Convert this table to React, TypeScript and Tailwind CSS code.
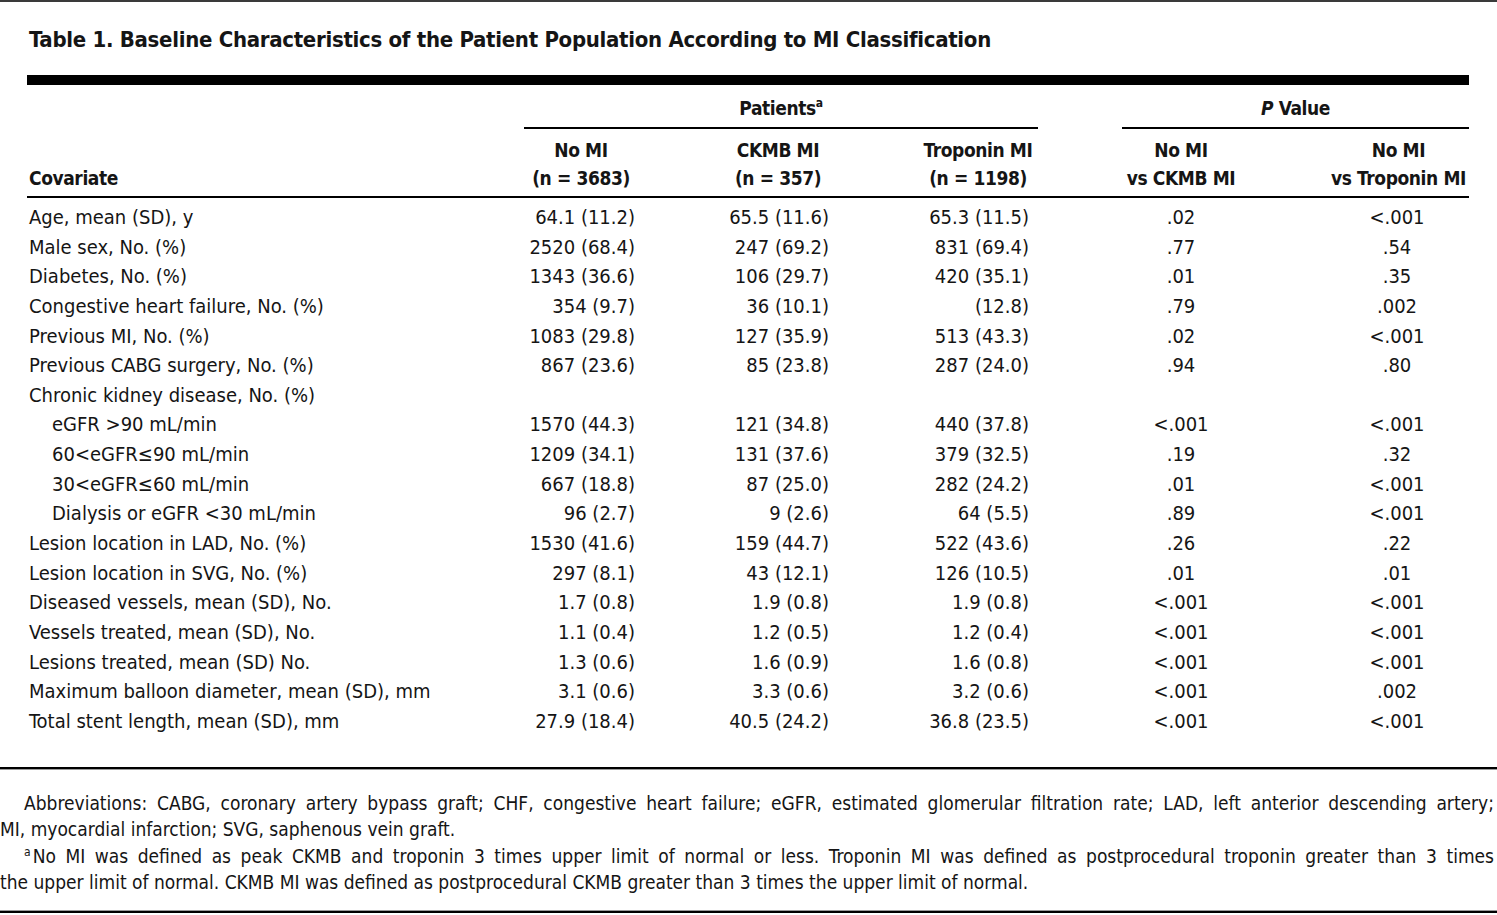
const rows: { label: string; indent?: boolean; v: string[] }[] = [
  { label: "Age, mean (SD), y", v: ["64.1 (11.2)", "65.5 (11.6)", "65.3 (11.5)", ".02", "<.001"] },
  { label: "Male sex, No. (%)", v: ["2520 (68.4)", "247 (69.2)", "831 (69.4)", ".77", ".54"] },
  { label: "Diabetes, No. (%)", v: ["1343 (36.6)", "106 (29.7)", "420 (35.1)", ".01", ".35"] },
  { label: "Congestive heart failure, No. (%)", v: ["354 (9.7)", "36 (10.1)", "(12.8)", ".79", ".002"] },
  { label: "Previous MI, No. (%)", v: ["1083 (29.8)", "127 (35.9)", "513 (43.3)", ".02", "<.001"] },
  { label: "Previous CABG surgery, No. (%)", v: ["867 (23.6)", "85 (23.8)", "287 (24.0)", ".94", ".80"] },
  { label: "Chronic kidney disease, No. (%)", v: ["", "", "", "", ""] },
  { label: "eGFR >90 mL/min", indent: true, v: ["1570 (44.3)", "121 (34.8)", "440 (37.8)", "<.001", "<.001"] },
  { label: "60<eGFR≤90 mL/min", indent: true, v: ["1209 (34.1)", "131 (37.6)", "379 (32.5)", ".19", ".32"] },
  { label: "30<eGFR≤60 mL/min", indent: true, v: ["667 (18.8)", "87 (25.0)", "282 (24.2)", ".01", "<.001"] },
  { label: "Dialysis or eGFR <30 mL/min", indent: true, v: ["96 (2.7)", "9 (2.6)", "64 (5.5)", ".89", "<.001"] },
  { label: "Lesion location in LAD, No. (%)", v: ["1530 (41.6)", "159 (44.7)", "522 (43.6)", ".26", ".22"] },
  { label: "Lesion location in SVG, No. (%)", v: ["297 (8.1)", "43 (12.1)", "126 (10.5)", ".01", ".01"] },
  { label: "Diseased vessels, mean (SD), No.", v: ["1.7 (0.8)", "1.9 (0.8)", "1.9 (0.8)", "<.001", "<.001"] },
  { label: "Vessels treated, mean (SD), No.", v: ["1.1 (0.4)", "1.2 (0.5)", "1.2 (0.4)", "<.001", "<.001"] },
  { label: "Lesions treated, mean (SD) No.", v: ["1.3 (0.6)", "1.6 (0.9)", "1.6 (0.8)", "<.001", "<.001"] },
  { label: "Maximum balloon diameter, mean (SD), mm", v: ["3.1 (0.6)", "3.3 (0.6)", "3.2 (0.6)", "<.001", ".002"] },
  { label: "Total stent length, mean (SD), mm", v: ["27.9 (18.4)", "40.5 (24.2)", "36.8 (23.5)", "<.001", "<.001"] },
];

function Cells({ v }: { v: string[] }) {
  return (
    <>
      <div className="w-[114px] pr-[3px] text-right">{v[0]}</div>
      <div className="ml-[82px] w-[116px] pr-[7px] text-right">{v[1]}</div>
      <div className="ml-[84px] w-[116px] pr-[7px] text-right">{v[2]}</div>
      <div className="ml-[86px] w-[118px] text-center">{v[3]}</div>
      <div className="ml-[88px] w-[141px] pr-[3px] text-center">{v[4]}</div>
    </>
  );
}

function Head({ a, b, cls }: { a: string; b: string; cls: string }) {
  return (
    <div className={`${cls} flex flex-col items-center`}>
      <div className="whitespace-nowrap">{a}</div>
      <div className="whitespace-nowrap">{b}</div>
    </div>
  );
}

export default function App() {
  return (
    <div className="w-[1497px] h-[915px] overflow-hidden bg-white border-t-2 border-[#3a3a3a] text-[#151515] font-['DejaVu_Sans_Condensed','DejaVu_Sans',sans-serif] [font-stretch:condensed]">
      <h1 className="mt-[23px] ml-[29px] h-[30px] text-[22px] leading-[30px] tracking-[-0.3px] font-bold whitespace-nowrap">
        Table 1. Baseline Characteristics of the Patient Population According to MI Classification
      </h1>

      <div className="mt-[20px] ml-[27px] w-[1442px] h-[10px] bg-black" />

      {/* group headers */}
      <div className="ml-[27px] w-[1442px] flex text-[19px] tracking-[-0.4px] font-bold">
        <div className="w-[497px]" />
        <div className="w-[514px]">
          <div className="mt-[11px] h-[24px] leading-[24px] text-center">
            Patients<sup className="text-[12px] font-bold relative -top-[8px]">a</sup>
          </div>
          <div className="mt-[7px] h-[2px] bg-black" />
        </div>
        <div className="ml-[84px] w-[347px]">
          <div className="mt-[11px] h-[24px] leading-[24px] text-center">
            <i>P</i> Value
          </div>
          <div className="mt-[7px] h-[2px] bg-black" />
        </div>
      </div>

      {/* column headers */}
      <div className="mt-[7px] ml-[27px] w-[1442px] flex items-end text-[19px] leading-[28px] tracking-[-0.4px] font-bold">
        <div className="w-[497px] pl-[2px]">Covariate</div>
        <Head cls="w-[114px]" a="No MI" b="(n = 3683)" />
        <Head cls="ml-[82px] w-[116px]" a="CKMB MI" b="(n = 357)" />
        <Head cls="ml-[84px] w-[116px]" a="Troponin MI" b="(n = 1198)" />
        <Head cls="ml-[86px] w-[118px]" a="No MI" b="vs CKMB MI" />
        <Head cls="ml-[88px] w-[141px]" a="No MI" b="vs Troponin MI" />
      </div>
      <div className="mt-[4px] ml-[27px] w-[1442px] h-[2px] bg-black" />

      {/* body */}
      <div className="mt-[5px] ml-[27px] w-[1442px] text-[20px]">
        {rows.map((r) => (
          <div key={r.label} className="flex h-[29.65px] leading-[29.65px] whitespace-nowrap">
            <div className={`w-[497px] ${r.indent ? "pl-[25px]" : "pl-[2px]"}`}>{r.label}</div>
            <Cells v={r.v} />
          </div>
        ))}
      </div>

      <div className="mt-[30px] w-full h-[2px] bg-black" />
      <div className="w-full h-[1px] bg-[#9a9a9a]" />

      {/* footnotes */}
      <div className="mt-[20px] pr-[3px] text-[19px] leading-[26.6px] whitespace-nowrap">
        <div className="pl-[24px] text-justify [text-align-last:justify]">
          Abbreviations: CABG, coronary artery bypass graft; CHF, congestive heart failure; eGFR, estimated glomerular filtration rate; LAD, left anterior descending artery;
        </div>
        <div>MI, myocardial infarction; SVG, saphenous vein graft.</div>
        <div className="pl-[24px] text-justify [text-align-last:justify]">
          <sup className="text-[12px] relative -top-[7px] mr-[2px]">a</sup>No MI was defined as peak CKMB and troponin 3 times upper limit of normal or less. Troponin MI was defined as postprocedural troponin greater than 3 times
        </div>
        <div>the upper limit of normal. CKMB MI was defined as postprocedural CKMB greater than 3 times the upper limit of normal.</div>
      </div>

      <div className="mt-[14px] w-full h-[1px] bg-[#9a9a9a]" />
      <div className="w-full h-[2px] bg-black" />
    </div>
  );
}
